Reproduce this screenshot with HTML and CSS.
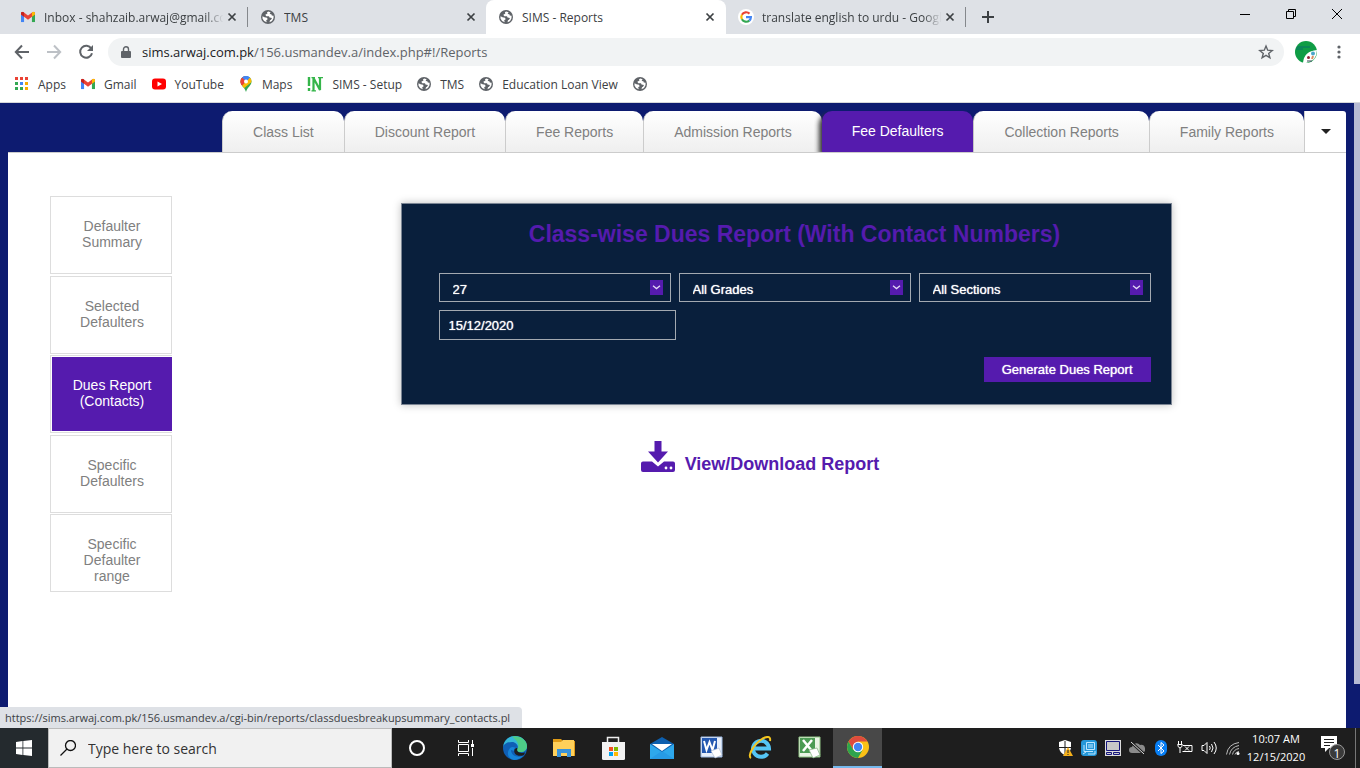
FILE: index.html
```html
<!DOCTYPE html>
<html lang="en">
<head>
<meta charset="utf-8">
<title>SIMS - Reports</title>
<link rel="stylesheet" href="styles.css">
</head>
<body>
<svg class="sprite" aria-hidden="true">
  <symbol id="globe" viewBox="0 0 14 14"><circle cx="7" cy="7" r="7" fill="#5f6368"/><path d="M7.200 1.500Q5 2.500 6.500 3.500L4.300 4.800 5.300 6.300 8 6.300 8.500 7.600 11 7.900Q10 10 9 10.300L8.500 12.300Q11.800 11.300 12.500 8.300L12.600 5.800 10.800 5.600 10.400 4.300 8.600 4.100 9.600 2.200zM1.500 6.300 3.500 7.200 6 7.700 6.700 9.200 5.200 10.300 5.700 12.300Q2.300 11.300 1.500 8.500z" fill="#fff"/></symbol>
  <symbol id="gmail" viewBox="0 0 16 12"><path d="M0 1.500V11a1 1 0 0 0 1 1h2.500V4z" fill="#4285f4"/><path d="M12.500 4v8H15a1 1 0 0 0 1-1V1.500z" fill="#34a853"/><path d="M0 1.800C0 0 1.800-.4 3 .5L8 4.300 13 .5C14.200-.4 16 0 16 1.800V3L12.500 5.600 8 9 3.500 5.600 0 3z" fill="#ea4335"/><path d="M12.500.9V5.600L16 3V1.800C16 0 14.200-.4 13 .5z" fill="#fbbc04"/><path d="M0 3V1.800C0 .7.700.1 1.500 0L3.500.9V5.600z" fill="#c5221f"/></symbol>
  <symbol id="close" viewBox="0 0 10 10"><path d="M1.500 1.500l7 7M8.500 1.500l-7 7" stroke="#3c4043" stroke-width="1.700" fill="none"/></symbol>
  <symbol id="drop" viewBox="0 0 13 15"><path d="M0 0h13v15H0z" fill="#551bae"/><path d="M3 5.800L6.500 8.600 10 5.800" stroke="#e4d8f5" stroke-width="1.300" fill="none"/></symbol>
</svg>

<header class="browser">
  <div class="tabstrip">
    <div class="btab"><svg class="fav" viewBox="0 -2 16 16"><use href="#gmail" width="16" height="12"/></svg><span class="btitle fade">Inbox - shahzaib.arwaj@gmail.co</span><button class="x" aria-label="Close tab"><svg><use href="#close"/></svg></button></div>
    <div class="btab"><svg class="fav"><use href="#globe"/></svg><span class="btitle">TMS</span><button class="x" aria-label="Close tab"><svg><use href="#close"/></svg></button></div>
    <div class="btab current"><svg class="fav"><use href="#globe"/></svg><span class="btitle">SIMS - Reports</span><button class="x" aria-label="Close tab"><svg><use href="#close"/></svg></button></div>
    <div class="btab"><svg class="fav wide" viewBox="0 0 16 16"><circle cx="8" cy="8" r="8" fill="#fff"/><g fill="none" stroke-width="2.200"><path d="M3.900 5.700A4.900 4.900 0 0 1 11.500 4.600" stroke="#ea4335"/><path d="M3.900 10.300A4.900 4.900 0 0 1 3.900 5.700" stroke="#fbbc05"/><path d="M11.300 11.600A4.900 4.900 0 0 1 3.900 10.300" stroke="#34a853"/><path d="M8 8.200H12.900A4.900 4.900 0 0 1 11.300 11.600" stroke="#4285f4"/></g></svg><span class="btitle fade">translate english to urdu - Googl</span><button class="x" aria-label="Close tab"><svg><use href="#close"/></svg></button></div>
    <button class="newtab" aria-label="New tab"><svg viewBox="0 0 12 12"><path d="M6 0v12M0 6h12" stroke="#3c4043" stroke-width="2"/></svg></button>
    <div class="wincontrols">
      <button aria-label="Minimize"><svg viewBox="0 0 12 12"><path d="M1 6.500h10" stroke="#000"/></svg></button>
      <button aria-label="Restore"><svg viewBox="0 0 12 12"><path d="M1.500 3.500h7v7h-7zM3.500 3.500v-2h7v7h-2" fill="none" stroke="#000"/></svg></button>
      <button aria-label="Close"><svg viewBox="0 0 12 12"><path d="M1 1l10 10M11 1L1 11" stroke="#000"/></svg></button>
    </div>
  </div>
  <div class="toolbar">
    <button class="nav" aria-label="Back"><svg viewBox="0 0 16 16"><path d="M15 8H2M8 1.500 1.800 8 8 14.500" fill="none" stroke="#5f6368" stroke-width="2"/></svg></button>
    <button class="nav" aria-label="Forward"><svg viewBox="0 0 16 16"><path d="M1 8h13M8 1.500 14.200 8 8 14.500" fill="none" stroke="#bdc1c6" stroke-width="2"/></svg></button>
    <button class="nav" aria-label="Reload"><svg viewBox="0 0 16 16"><path d="M13.300 4.600A6 6 0 1 0 14 9.200" fill="none" stroke="#5f6368" stroke-width="2"/><path d="M15 1v6H9z" fill="#5f6368"/></svg></button>
    <div class="omnibox">
      <svg class="lock" viewBox="0 0 10 13"><path d="M1 5h8a1 1 0 0 1 1 1v5a1 1 0 0 1-1 1H1a1 1 0 0 1-1-1V6a1 1 0 0 1 1-1z" fill="#5f6368"/><path d="M2.500 5V3.300a2.500 2.500 0 0 1 5 0V5" fill="none" stroke="#5f6368" stroke-width="1.400"/></svg>
      <a class="url" href="#!/Reports"><b>sims.arwaj.com.pk</b>/156.usmandev.a/index.php#!/Reports</a>
      <button class="star" aria-label="Bookmark this page"><svg viewBox="0 0 16 16"><path d="M8 2l1.700 4.200 4.500.3-3.500 2.900 1.200 4.400L8 11.400l-3.900 2.400 1.200-4.400L1.800 6.500l4.500-.3z" fill="none" stroke="#5f6368" stroke-width="1.400"/></svg></button>
    </div>
    <button class="avatar" aria-label="Profile"><svg viewBox="0 0 22 22"><circle cx="11" cy="11" r="11" fill="#0f9d45"/><path d="M2 6h13M1 8h7" stroke="#08706a"/><path d="M8 22Q9 10 22 9 22 20 11 22z" fill="#fff"/><circle cx="18" cy="12.500" r="2" fill="#4aa6c9"/><path d="M18 15l-1 3" stroke="#d98a5c" stroke-width="2"/><circle cx="13.500" cy="16.500" r="1.500" fill="#8b2735"/><path d="M12 20h5" stroke="#334455"/></svg></button>
    <button class="more" aria-label="Menu"><svg viewBox="0 0 4 14"><g fill="#5f6368"><circle cx="2" cy="2" r="1.600"/><circle cx="2" cy="7" r="1.600"/><circle cx="2" cy="12" r="1.600"/></g></svg></button>
  </div>
  <nav class="bookmarks" aria-label="Bookmarks">
    <a href="#apps"><svg viewBox="0 0 14 14"><path d="M0 0h3v3H0zM5 0h3v3H5zM10 0h3v3h-3z" fill="#ea4335"/><path d="M0 5h3v3H0zM0 10h3v3H0zM5 10h3v3H5z" fill="#34a853"/><path d="M5 5h3v3H5z" fill="#4285f4"/><path d="M10 5h3v3h-3zM10 10h3v3h-3z" fill="#f9ab00"/></svg>Apps</a>
    <a href="#gmail-link"><svg viewBox="0 -2 16 16"><use href="#gmail" width="16" height="12"/></svg>Gmail</a>
    <a href="#youtube"><svg viewBox="0 0 14 14"><rect y="1.500" width="14" height="11" rx="3" fill="#f00"/><path d="M5.500 4.500v5L10 7z" fill="#fff"/></svg>YouTube</a>
    <a href="#maps"><svg viewBox="0 0 14 16"><clipPath id="pin"><path d="M7 0a5.500 5.500 0 0 1 5.500 5.500C12.500 9.500 8.500 11 7 16 5.500 11 1.500 9.500 1.500 5.500A5.500 5.500 0 0 1 7 0z"/></clipPath><g clip-path="url(#pin)"><path d="M0 0h14v16H0z" fill="#34a853"/><path d="M0 0h7l2 4-8 8z" fill="#ea4335"/><path d="M4 0h10L7 7 3 2z" fill="#4285f4"/><path d="M12 0 1 12l3 1L14 5z" fill="#fbbc04"/><path d="M4 0h8L7 6 3 2z" fill="#4285f4"/><path d="M3 1.500 7 5 2 10-1 5z" fill="#ea4335"/></g><circle cx="7" cy="5.500" r="2" fill="#fff"/></svg>Maps</a>
    <a href="#setup"><svg class="setup" viewBox="0 0 16 16"><g fill="none" stroke="#35b54a"><path d="M2 1v9M2 12v3" stroke-width="2.400"/><path d="M6.500 15V2L13 14V2" stroke-width="2.200"/><path d="M4.500 1.600H8M11 1.600h5M4.500 14.800H9" stroke-width="1.200"/></g></svg>SIMS - Setup</a>
    <a href="#tms"><svg><use href="#globe"/></svg>TMS</a>
    <a href="#loan"><svg><use href="#globe"/></svg>Education Loan View</a>
    <a href="#other" aria-label="Untitled bookmark"><svg><use href="#globe"/></svg></a>
  </nav>
</header>

<div class="page">
  <div class="site">
    <nav class="tabs" aria-label="Report groups">
      <a href="#class">Class List</a>
      <a href="#discount">Discount Report</a>
      <a href="#fee">Fee Reports</a>
      <a href="#admission">Admission Reports</a>
      <a href="#defaulters" class="active">Fee Defaulters</a>
      <a href="#collection">Collection Reports</a>
      <a href="#family">Family Reports</a>
      <button aria-label="More reports"><svg viewBox="0 0 10 5"><path d="M0 0h10L5 5z" fill="#222"/></svg></button>
    </nav>
    <div class="content">
      <nav class="side" aria-label="Defaulter reports">
        <a href="#summary">Defaulter Summary</a>
        <a href="#selected">Selected Defaulters</a>
        <a href="#dues" class="active"><span>Dues Report (Contacts)</span></a>
        <a href="#specific">Specific Defaulters</a>
        <a href="#range">Specific Defaulter range</a>
      </nav>
      <main class="main">
        <form class="card">
          <h1>Class-wise Dues Report (With Contact Numbers)</h1>
          <div class="fields">
            <div class="pick"><select aria-label="Campus"><option>27</option></select><svg><use href="#drop"/></svg></div>
            <div class="pick"><select aria-label="Grade"><option>All Grades</option></select><svg><use href="#drop"/></svg></div>
            <div class="pick"><select aria-label="Section"><option>All Sections</option></select><svg><use href="#drop"/></svg></div>
          </div>
          <input class="date" type="text" aria-label="Date" value="15/12/2020">
          <button class="generate" type="button">Generate Dues Report</button>
        </form>
        <a class="download" href="#report"><svg viewBox="0 0 34 32"><path d="M13.500 0h7v10.500H27L17 21.500 7 10.500h6.500z" fill="#551bae"/><path d="M2 20.500h9L17 25.500l6-5H32a2 2 0 0 1 2 2V29a2 2 0 0 1-2 2H2a2 2 0 0 1-2-2v-6.500a2 2 0 0 1 2-2z" fill="#551bae"/><circle cx="25" cy="27" r="1.400" fill="#fff"/><circle cx="30" cy="27" r="1.400" fill="#fff"/></svg><span>View/Download Report</span></a>
      </main>
    </div>
  </div>
  <div class="scroll"></div>
  <div class="status">https://sims.arwaj.com.pk/156.usmandev.a/cgi-bin/reports/classduesbreakupsummary_contacts.pl</div>
</div>

<footer class="taskbar">
  <button class="start" aria-label="Start"><svg viewBox="0 0 16 16"><path d="M0 2l6.500-.9v6.500H0zM7.300 1 16 0v7.600H7.300zM0 8.400h6.500v6.500L0 14zM7.300 8.400H16V16l-8.700-1z" fill="#fff"/></svg></button>
  <label class="search"><svg viewBox="0 0 16 16"><circle cx="10.500" cy="5.500" r="5" fill="none" stroke="#111" stroke-width="1.300"/><path d="M7 9 .5 15.500" stroke="#111" stroke-width="1.300"/></svg><input type="text" placeholder="Type here to search" aria-label="Search"></label>
  <div class="apps">
    <button aria-label="Cortana"><svg viewBox="0 0 24 24"><circle cx="12" cy="12" r="7" fill="none" stroke="#fff" stroke-width="2"/></svg></button>
    <button aria-label="Task View"><svg viewBox="0 0 24 24"><g fill="none" stroke="#fff"><path d="M4.500 8.500h10v7h-10zM4.500 4v2.500h10V4M4.500 20v-2.500h10V20M18.500 4v4M18.500 12v8"/></g><path d="M17 8h3v3h-3z" fill="#fff"/></svg></button>
    <button aria-label="Edge"><svg viewBox="0 0 24 24"><circle cx="12" cy="12" r="12" fill="#0f5fb5"/><path d="M0 11C1 4 6 0 12 0c7 0 12 5 12 10 0 4-3 6-6 6-4 0-5-2-3.500-3.500C16 10 13 6 9 6 4 6 1 8 0 11z" fill="#35b8d8"/><path d="M9 .4C17-1 24 4 24 10c0 4-3 6-6 6-4 0-5-2-3.500-3.500C17 9 14 4 9 .4z" fill="#55d36c" opacity=".75"/><path d="M8 14c0 5 5 7.500 10 6.500l3-1.500C18 22.500 14 24 11 24 5 23 3 17 7 12c2-2 5-1 6.500.5-2-.5-3 .5-2 2.500" fill="#1684d8"/><path d="M14.500 12.500C13 15 16 18 22 16.500L21 19c-6 2.500-11-1-9.500-5.500 1-1.500 2.500-2 3-1z" fill="#1e1e1e"/></svg></button>
    <button aria-label="File Explorer"><svg viewBox="0 0 24 24"><path d="M1 3h8l2 2h12v15H1z" fill="#e09b16"/><path d="M1 6h8l2-2h11v16H1z" fill="#ffd05a"/><path d="M5 13h14v8h-4v-4H9v4H5z" fill="#3993d9"/></svg></button>
    <button aria-label="Store"><svg viewBox="0 0 24 24"><path d="M6.500 7V1.500h11V7" fill="none" stroke="#eee" stroke-width="1.500"/><path d="M1 6h23v16.500a1.500 1.500 0 0 1-1.500 1.500h-20A1.500 1.500 0 0 1 1 22.500z" fill="#f2f2f2"/><path d="M8 11h4v4H8z" fill="#f25022"/><path d="M13 11h4v4h-4z" fill="#7fba00"/><path d="M8 16h4v4H8z" fill="#00a4ef"/><path d="M13 16h4v4h-4z" fill="#ffb900"/></svg></button>
    <button aria-label="Mail"><svg viewBox="0 0 24 24"><path d="M0 8 12 1l12 7v8H0z" fill="#0d5fae"/><path d="M0 8l12 8 12-8v15H0z" fill="#2ea8ec"/><path d="M0 23 12 15l12 8z" fill="#1f8ee0" opacity=".5"/><path d="M2 8h20L12 15z" fill="#fff"/></svg></button>
    <button aria-label="Word"><svg viewBox="0 0 24 24"><path d="M2 1h21v20H2z" fill="#e8effa" stroke="#9db9e2"/><path d="M3 2h15v15H3z" fill="#2458b0"/><path d="M5 5l2.500 9L10.500 6l3 8L16 5" fill="none" stroke="#fff" stroke-width="2"/><path d="M12 15l8-3 3 7-7 3z" fill="#fff" stroke="#a9b8d2" stroke-width=".6"/></svg></button>
    <button aria-label="Internet Explorer"><svg viewBox="0 0 24 24"><path d="M19.500 17.500A8 8 0 1 1 21 12.500H7" fill="none" stroke="#55c5f5" stroke-width="4"/><path d="M3 22C-1 20 6 8 14 3c5-3 9-3 8 2" fill="none" stroke="#f4c51e" stroke-width="2"/></svg></button>
    <button aria-label="Excel"><svg viewBox="0 0 24 24"><path d="M2 1h21v20H2z" fill="#e9f4e5" stroke="#8fc484"/><path d="M3 2h15v15H3z" fill="#3b9144" opacity=".9"/><path d="M6 4l9 11M15 4 6 15" stroke="#fff" stroke-width="2.500"/><path d="M12 14l8-2 3 7-7 3z" fill="#fff" stroke="#7cb07d" stroke-width=".7"/></svg></button>
    <button class="running" aria-label="Chrome"><svg viewBox="0 0 24 24"><circle cx="12" cy="12" r="11" fill="#fbc116"/><path d="M2.500 6.500a11 11 0 0 1 19 0H12L7 14.500z" fill="#dd4b3e"/><path d="M2.500 6.500A11 11 0 0 0 12 23l4.500-8L12 17l-5-2.500z" fill="#2da44e"/><circle cx="12" cy="12" r="5.200" fill="#fff"/><circle cx="12" cy="12" r="4.200" fill="#4285f4"/></svg></button>
  </div>
  <div class="tray">
    <svg viewBox="0 0 16 16"><path d="M8 0l6 2v5c0 4-3 7-6 8-3-1-6-4-6-8V2z" fill="#fff"/><path d="M8 1v13M2 7.500h12" stroke="#1e1e1e"/><path d="M11 7l5 9H6z" fill="#f7b21b"/><path d="M11 10v3M11 14v1" stroke="#222"/></svg>
    <svg viewBox="0 0 16 16"><rect width="16" height="16" rx="3" fill="#2497d8"/><path d="M5.500 2.500h8v7h-8zM7 5h5M7 7h5M3 5v6.500h9M2 14l3-2M14 11v3H7" fill="none" stroke="#bfe7ff"/></svg>
    <svg viewBox="0 0 16 16"><path d="M0 0h16v16H0z" fill="#ddd"/><path d="M1.500 1.500h13v9h-13zM1.500 12.500h5v2h-5zM8.500 12.500h6v2h-6z" fill="#c8c8c8" stroke="#15157c"/></svg>
    <svg viewBox="0 0 16 16"><path d="M3 13a3 3 0 0 1 0-6 4.500 4.500 0 0 1 8-2 4 4 0 0 1 2 8z" fill="#8b8b8b"/><path d="M2 2l13 12" stroke="#1e1e1e" stroke-width="3"/><path d="M2 2l13 12" stroke="#ddd"/></svg>
    <svg viewBox="0 0 16 16"><rect x="2" width="12" height="16" rx="6" fill="#087ff5"/><path d="M5 5l6 6-3 2.500v-11L11 5l-6 6" fill="none" stroke="#fff"/></svg>
    <svg viewBox="0 0 16 16"><g fill="none" stroke="#fff"><path d="M1.500 1v3M4.500 1v3M.5 4.500h5M1 4.500v2l2 1.500 2-1.500v-2M3 8v5"/><path d="M6 5.500h9v6H5.500M8 6.500l4 4M12 6.500l-4 4"/></g></svg>
    <svg viewBox="0 0 16 16"><path d="M1 5.500h2l3-3v11l-3-3H1zM8.500 6q1.500 2 0 4M10.500 4q3 4 0 8M13 2q4.500 6 0 12" fill="none" stroke="#fff"/></svg>
    <svg viewBox="0 0 16 16"><g fill="none" stroke="#bbb"><path d="M1.500 14.500Q3 4 14 2.500M4.500 14.500Q6 7 14 5.500M7.500 14.500Q8.500 9.500 14 8.500M10 14.500Q10.500 12 14 11.500"/></g><circle cx="13" cy="13.500" r="1.500" fill="#fff"/></svg>
  </div>
  <div class="clock"><span>10:07 AM</span><span>12/15/2020</span></div>
  <button class="notify" aria-label="Notifications"><svg viewBox="0 0 26 26"><path d="M1 1h16v12H9l-4 4v-4H1z" fill="#fff"/><path d="M4 4.500h10M4 7.500h10M4 10.500h6" stroke="#1e1e1e"/><circle cx="17" cy="17" r="7.500" fill="#3a3a3a" stroke="#999"/></svg><span>1</span></button>
</footer>
</body>
</html>
```
FILE: styles.css
```css
* { box-sizing: border-box; }
body {
  margin: 0;
  height: 100vh;
  display: flex;
  flex-direction: column;
  overflow: hidden;
  font-family: "Open Sans", "Noto Sans", sans-serif;
  font-size: 12px;
  color: #3c4043;
  background: #fff;
}
button { border: 0; padding: 0; margin: 0; background: none; font: inherit; color: inherit; display: flex; align-items: center; justify-content: center; }
a { color: inherit; text-decoration: none; }
svg { display: block; flex: none; }
.sprite { position: absolute; width: 0; height: 0; }

.browser { flex: none; border-bottom: 1px solid #d5d7da; }
.tabstrip { display: flex; height: 34px; background: #dee1e6; padding-left: 8px; }
.btab { display: flex; align-items: center; width: 240px; padding: 0 11px 0 12px; position: relative; }
.btab:not(.current)::after { content: ""; position: absolute; right: 0; top: 7px; height: 20px; width: 1px; background: #85888c; }
.btab:nth-child(2) { width: 238px; padding-right: 10px; }
.btab:nth-child(2)::after { display: none; }
.btab.current { background: #fff; border-radius: 8px 8px 0 0; }
.fav { width: 16px; height: 16px; padding: 1px; }
.fav.wide { padding: 0; }
.btitle { flex: 1; min-width: 0; margin-left: 8px; overflow: hidden; white-space: nowrap; }
.fade { -webkit-mask-image: linear-gradient(90deg, #000 88%, transparent 98%); mask-image: linear-gradient(90deg, #000 88%, transparent 98%); }
.x svg { width: 10px; height: 10px; }
.newtab { width: 44px; }
.newtab svg { width: 12px; height: 12px; }
.wincontrols { margin-left: auto; display: flex; height: 28px; }
.wincontrols button { width: 46px; }
.wincontrols svg { width: 12px; height: 12px; }

.toolbar { display: flex; align-items: center; height: 36px; padding: 0 13px 0 6px; }
.nav { width: 32px; }
.nav svg { width: 16px; height: 16px; }
.omnibox { flex: 1; display: flex; align-items: center; height: 28px; margin: 0 11px 0 6px; padding: 0 10px 0 13px; border-radius: 14px; background: #f1f3f4; font-size: 13px; color: #5f6368; }
.lock { width: 10px; height: 13px; }
.url { flex: 1; margin-left: 11px; }
.url b { font-weight: 400; color: #202124; }
.star svg { width: 16px; height: 16px; }
.avatar svg { width: 22px; height: 22px; }
.more { width: 16px; margin-left: 14px; }
.more svg { width: 4px; height: 14px; }
.bookmarks { display: flex; align-items: center; gap: 15px; height: 32px; padding: 0 15px 4px; }
.bookmarks a { display: flex; align-items: center; gap: 9px; }
.bookmarks svg { width: 14px; height: 16px; }
.bookmarks .setup { width: 16px; }

.page { flex: 1; min-height: 0; display: flex; position: relative; background: #0d1b70; font-family: "Liberation Sans", Arial, sans-serif; font-size: 14px; }
.site { flex: 1; display: flex; flex-direction: column; padding: 8px 8px 0; }
.scroll { width: 6px; height: 93%; background: #b6bad4; }
.tabs { display: flex; justify-content: flex-end; height: 41px; }
.tabs a { display: flex; align-items: center; padding: 0 30px; border-left: 1px solid #ccc; border-radius: 10px 10px 0 0; background: linear-gradient(#fff, #efefef); color: #808080; white-space: nowrap; }
.tabs .active { padding: 0 30px 1px; border: 0; background: #551bae; color: #fff; box-shadow: -3px 3px 5px #333; clip-path: inset(0 0 0 -8px); }
.tabs button { width: 42px; border-left: 1px solid #ccc; border-radius: 0 3px 0 0; background: #fff; }
.tabs svg { width: 10px; height: 5px; }
.content { flex: 1; display: flex; border-top: 1px solid #ccc; background: #fff; padding: 43px 48px 0 42px; }
.side { flex: none; width: 122px; height: 396px; display: flex; flex-direction: column; justify-content: space-between; text-align: center; line-height: 16px; color: #808080; }
.side a { height: 78px; padding: 21px 24px 0 26px; border: 1px solid #ddd; }
.side .active { padding: 1px 0 1px 1px; border-right: 0; color: #fff; }
.side .active span { display: block; height: 74px; padding: 20px 20px 0; background: #551bae; }
.main { flex: 1; margin-left: 50px; padding-top: 7px; display: flex; flex-direction: column; align-items: center; }
.card { margin-left: 52px; padding: 15px 20px 22px 37px; border: 1px solid #7b8594; background: #091f3c; box-shadow: 0 0 8px rgba(0, 0, 0, .25); font-size: 13px; }
.card h1 { margin: 0 0 23px; font-size: 23px; line-height: 31px; text-align: center; color: #551bae; }
.fields { display: grid; grid-template-columns: repeat(3, 232px); gap: 8px; }
.pick { position: relative; }
.pick svg { position: absolute; right: 8px; top: 7px; width: 13px; height: 15px; pointer-events: none; }
.pick select, .date { font: inherit; color: #fff; background: transparent; border: 1px solid #a3a9b1; border-radius: 0; text-shadow: 0 0 1px #fff; }
.pick select { display: block; appearance: none; width: 100%; height: 29px; padding: 3px 12px 0 13px; }
.date { display: block; width: 237px; height: 30px; margin: 8px 0 17px; padding: 0 9px; }
.generate { margin-left: auto; height: 25px; padding: 0 18px; background: #551bae; color: #fff; text-shadow: 0 0 1px #fff; }
.download { display: flex; align-items: flex-end; gap: 10px; margin-top: 36px; font-size: 18px; font-weight: 700; color: #551bae; line-height: 18px; }
.download svg { width: 34px; height: 32px; }
.status { position: absolute; left: 0; bottom: 0; padding: 0 12px 0 5px; height: 21px; line-height: 21px; border-radius: 0 4px 0 0; background: #dee1e6; font-family: "Open Sans", "Noto Sans", sans-serif; font-size: 11px; color: #3c4043; }

.taskbar { flex: none; display: flex; height: 40px; background: #1e1e1e; color: #fff; }
.start { width: 48px; background: #242a2e; }
.start svg { width: 16px; height: 16px; }
.search { display: flex; align-items: center; gap: 12px; width: 344px; padding-left: 11px; background: #f1f1f1; border: 1px solid #bbb; }
.search svg { width: 16px; height: 16px; }
.search input { flex: 1; min-width: 0; border: 0; padding: 0; background: none; font: inherit; font-size: 14px; color: #222; }
.search input::placeholder { color: #333; }
.apps { display: flex; }
.apps button { width: 49px; }
.apps .running { background: #484848; border-bottom: 2px solid #76b9ed; }
.apps svg { width: 24px; height: 24px; }
.tray { margin-left: auto; display: flex; align-items: center; gap: 8px; }
.tray svg { width: 16px; height: 16px; }
.clock { width: 70px; display: flex; flex-direction: column; justify-content: center; align-items: center; line-height: 18px; font-size: 11px; }
.notify { width: 45px; margin-right: 4px; border-right: 1px solid #777; position: relative; }
.notify svg { width: 26px; height: 26px; }
.notify span { position: absolute; left: 21px; top: 17px; width: 10px; line-height: 18px; text-align: center; }
```
